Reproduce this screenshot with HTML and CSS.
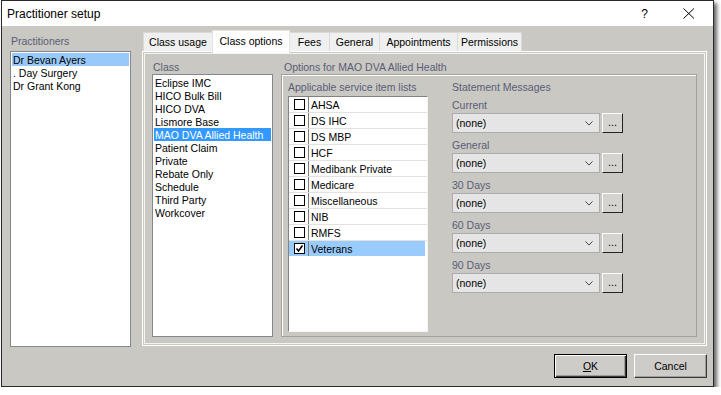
FILE: index.html
```html
<!DOCTYPE html>
<html>
<head>
<meta charset="utf-8">
<link rel="stylesheet" href="styles.css">
</head>
<body>
<div class="window">
  <div class="titlebar">
    <span class="title">Practitioner setup</span>
    <span class="help">?</span>
    <svg class="close" width="12" height="11" viewBox="0 0 12 11"><path d="M0.5 0.5 L11 10.5 M11 0.5 L0.5 10.5" stroke="#000" stroke-width="1" fill="none"/></svg>
  </div>
  <div class="main">
    <div class="leftcol">
      <div class="cap">Practitioners</div>
      <div class="listbox prac">
        <div class="item sel-soft">Dr Bevan Ayers</div>
        <div class="item">. Day Surgery</div>
        <div class="item">Dr Grant Kong</div>
      </div>
    </div>
    <div class="tabctl">
      <div class="tabs">
        <div class="tab t1">Class usage</div>
        <div class="tab t2 active">Class options</div>
        <div class="tab t3">Fees</div>
        <div class="tab t4">General</div>
        <div class="tab t5">Appointments</div>
        <div class="tab t6">Permissions</div>
      </div>
      <div class="panel">
        <div class="classcol">
          <div class="cap">Class</div>
          <div class="listbox classlist">
            <div class="item">Eclipse IMC</div>
            <div class="item">HICO Bulk Bill</div>
            <div class="item">HICO DVA</div>
            <div class="item">Lismore Base</div>
            <div class="item sel-strong">MAO DVA Allied Health</div>
            <div class="item">Patient Claim</div>
            <div class="item">Private</div>
            <div class="item">Rebate Only</div>
            <div class="item">Schedule</div>
            <div class="item">Third Party</div>
            <div class="item">Workcover</div>
          </div>
        </div>
        <div class="optcol">
          <div class="cap gcap">Options for MAO DVA Allied Health</div>
          <div class="group">
            <div class="svccol">
              <div class="cap">Applicable service item lists</div>
              <div class="svclist">
                <div class="row"><span class="chk"><span class="box"></span></span><span class="rtext">AHSA</span></div>
                <div class="row"><span class="chk"><span class="box"></span></span><span class="rtext">DS IHC</span></div>
                <div class="row"><span class="chk"><span class="box"></span></span><span class="rtext">DS MBP</span></div>
                <div class="row"><span class="chk"><span class="box"></span></span><span class="rtext">HCF</span></div>
                <div class="row"><span class="chk"><span class="box"></span></span><span class="rtext">Medibank Private</span></div>
                <div class="row"><span class="chk"><span class="box"></span></span><span class="rtext">Medicare</span></div>
                <div class="row"><span class="chk"><span class="box"></span></span><span class="rtext">Miscellaneous</span></div>
                <div class="row"><span class="chk"><span class="box"></span></span><span class="rtext">NIB</span></div>
                <div class="row"><span class="chk"><span class="box"></span></span><span class="rtext">RMFS</span></div>
                <div class="row rsel"><span class="chk"><span class="box"><svg width="9" height="9" viewBox="0 0 9 9"><path d="M1.5 4.5 L3.5 7 L7.5 1.5" stroke="#000" stroke-width="1.6" fill="none"/></svg></span></span><span class="rtext">Veterans</span></div>
              </div>
            </div>
            <div class="stmt">
              <div class="cap">Statement Messages</div>
              <div class="field">
                <div class="cap">Current</div>
                <div class="crow"><div class="combo">(none)<svg class="chev" width="8" height="5" viewBox="0 0 8 5"><path d="M0.5 0.5 L4 4 L7.5 0.5" stroke="#444" fill="none"/></svg></div><div class="dots">...</div></div>
              </div>
              <div class="field">
                <div class="cap">General</div>
                <div class="crow"><div class="combo">(none)<svg class="chev" width="8" height="5" viewBox="0 0 8 5"><path d="M0.5 0.5 L4 4 L7.5 0.5" stroke="#444" fill="none"/></svg></div><div class="dots">...</div></div>
              </div>
              <div class="field">
                <div class="cap">30 Days</div>
                <div class="crow"><div class="combo">(none)<svg class="chev" width="8" height="5" viewBox="0 0 8 5"><path d="M0.5 0.5 L4 4 L7.5 0.5" stroke="#444" fill="none"/></svg></div><div class="dots">...</div></div>
              </div>
              <div class="field">
                <div class="cap">60 Days</div>
                <div class="crow"><div class="combo">(none)<svg class="chev" width="8" height="5" viewBox="0 0 8 5"><path d="M0.5 0.5 L4 4 L7.5 0.5" stroke="#444" fill="none"/></svg></div><div class="dots">...</div></div>
              </div>
              <div class="field">
                <div class="cap">90 Days</div>
                <div class="crow"><div class="combo">(none)<svg class="chev" width="8" height="5" viewBox="0 0 8 5"><path d="M0.5 0.5 L4 4 L7.5 0.5" stroke="#444" fill="none"/></svg></div><div class="dots">...</div></div>
              </div>
            </div>
          </div>
        </div>
      </div>
    </div>
  </div>
  <div class="footer">
    <button class="btn default"><u>O</u>K</button>
    <button class="btn">Cancel</button>
  </div>
</div>
</body>
</html>
```
FILE: styles.css
```css
* { box-sizing: border-box; margin: 0; padding: 0; }
html, body { background: #fff; }
body {
  margin: 0;
  font-family: "Liberation Sans", Arial, sans-serif;
  font-size: 10.5px;
  color: #000;
}
.window {
  margin-left: 1px;
  width: 713px;
  height: 387px;
  border: 1px solid #2a2a2a;
  background: #c9c8c3;
  display: flex;
  flex-direction: column;
  box-shadow: 3px 3px 4px rgba(0, 0, 0, 0.6);
}
.titlebar {
  height: 25px;
  background: #fff;
  display: flex;
  align-items: center;
  padding-left: 5px;
  flex: none;
}
.title { font-size: 12px; flex: 1; }
.help { font-size: 12px; margin-right: 35px; }
.close { margin-right: 18px; margin-top: -1px; }

.main {
  height: 321px;
  flex: none;
  display: flex;
  padding: 4px 6px 0 8px;
  gap: 11px;
}
.leftcol { width: 121px; display: flex; flex-direction: column; }
.cap {
  color: #5a5d76;
  height: 16px;
  line-height: 17px;
  white-space: nowrap;
}
.leftcol > .cap { height: 21px; line-height: 22px; padding-left: 1px; }
.listbox {
  background: #fff;
  border: 1px solid #828790;
  padding: 1px;
  flex: 1;
}
.item {
  height: 13px;
  line-height: 14px;
  padding-left: 1px;
  white-space: nowrap;
}
.sel-soft { background: #99c9fb; }
.sel-strong { background: #3399ff; color: #fff; }

.tabctl { width: 565px; display: flex; flex-direction: column; }
.tabs { height: 21px; display: flex; align-items: flex-end; padding-left: 1px; position: relative; z-index: 1; }
.tab {
  height: 19px;
  line-height: 19px;
  text-align: center;
  background: #f0f0f0;
  border: 1px solid #d9d9d9;
  border-bottom: none;
  margin-right: -1px;
  white-space: nowrap;
}
.tab.active {
  height: 23px;
  line-height: 20px;
  background: #fff;
  margin-bottom: -2px;
  border-color: #e3e3e3;
  position: relative;
  z-index: 2;
}
.t1 { width: 70px; }
.t2 { width: 78px; }
.t3 { width: 41px; }
.t4 { width: 51px; }
.t5 { width: 79px; }
.t6 { width: 65px; }

.panel {
  height: 295px;
  border: 1px solid #fff;
  box-shadow: inset 0 0 0 1px #c9c8c3, inset 0 0 0 2px #f4f4f2;
  display: flex;
  padding: 7px 9px 8px 9px;
  gap: 8px;
}
.classcol { width: 121px; display: flex; flex-direction: column; }
.classcol > .cap { height: 15px; line-height: 16px; padding-left: 1px; }
.optcol { width: 416px; display: flex; flex-direction: column; }
.gcap { height: 15px; line-height: 16px; padding-left: 3px; }
.group {
  flex: 1;
  border: 1px solid #a3a29e;
  box-shadow: inset 1px 1px 0 #fff;
  display: flex;
  padding: 4px 0 4px 6px;
  gap: 24px;
}
.svccol { width: 140px; display: flex; flex-direction: column; }
.svccol > .cap { margin-bottom: 1px; }
.svclist {
  flex: 1;
  background: #fff;
  border-style: solid;
  border-width: 1px;
  border-color: #828282 #f4f4f4 #f4f4f4 #828282;
}
.row {
  height: 16px;
  display: flex;
  border-bottom: 1px solid #e2e2e2;
}
.chk {
  width: 20px;
  border-right: 1px solid #7e7e7e;
  display: flex;
  align-items: center;
  padding-left: 5px;
}
.box {
  width: 11px;
  height: 11px;
  border: 1px solid #000;
  background: #fff;
  display: flex;
  align-items: center;
  justify-content: center;
}
.box svg { display: block; }
.rtext { line-height: 16px; padding-left: 2px; }
.rsel { background: #99ccfd; border-bottom-color: #fff; margin-right: 2px; }

.stmt { width: 171px; display: flex; flex-direction: column; }
.stmt > .cap { margin-bottom: 2px; }
.field { margin-bottom: 4px; }
.crow { display: flex; gap: 2px; }
.combo {
  width: 149px;
  height: 20px;
  background: #e5e5e5;
  border: 1px solid #acacac;
  line-height: 19px;
  padding-left: 3px;
  display: flex;
  align-items: center;
  justify-content: space-between;
  padding-right: 6px;
}
.chev { display: block; }
.dots {
  width: 21px;
  height: 20px;
  background: #d4d3cf;
  border-style: solid;
  border-width: 1px;
  border-color: #fff #222 #222 #fff;
  text-align: center;
  line-height: 16px;
  font-size: 11px;
  letter-spacing: 0;
}

.footer {
  flex: none;
  display: flex;
  justify-content: flex-end;
  gap: 7px;
  padding: 7px 6px 0 0;
}
.btn {
  width: 73px;
  height: 24px;
  font-family: "Liberation Sans", Arial, sans-serif;
  font-size: 10.5px;
  color: #000;
  background: #cdccc8;
  border-style: solid;
  border-width: 1px;
  border-color: #fff #3a3a3a #3a3a3a #fff;
  box-shadow: inset -1px -1px 0 #9e9d99;
}
.btn.default {
  border: 1px solid #000;
  box-shadow: inset 1px 1px 0 #fff, inset -1px -1px 0 #3a3a3a, inset -2px -2px 0 #9e9d99;
}
```
